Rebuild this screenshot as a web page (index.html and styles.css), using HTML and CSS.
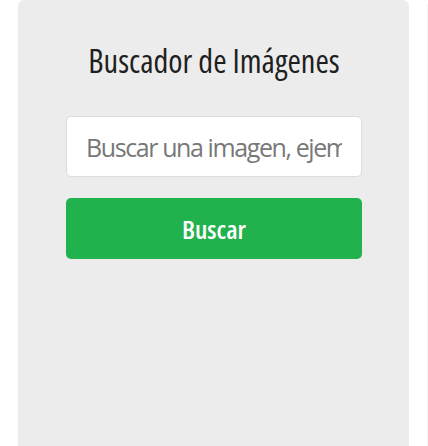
FILE: index.html
```html
<!DOCTYPE html>
<html lang="es">
<head>
<meta charset="utf-8">
<title>Buscador de Imágenes</title>
<link rel="stylesheet" href="styles.css">
</head>
<body>
<div class="layout">
  <section class="panel">
    <h1 class="title">Buscador de Imágenes</h1>
    <form class="search">
      <input class="search-input" type="text" placeholder="Buscar una imagen, ejemplo: café">
      <button class="search-button" type="button">Buscar</button>
    </form>
  </section>
  <section class="panel panel-next"></section>
</div>
</body>
</html>
```
FILE: styles.css
```css
html, body {
  margin: 0;
  padding: 0;
  background: #ffffff;
  height: 100%;
  overflow: hidden;
}

.layout {
  display: flex;
  gap: 18px;
  padding: 0 18px;
  height: 100%;
}

.panel {
  flex: 0 0 391px;
  box-sizing: border-box;
  background: #ececec;
  border-radius: 6px 6px 0 0;
  padding: 40px 47px 0 48px;
  display: flex;
  flex-direction: column;
}

.panel-next {
  background: #f6f6f6;
}

.title {
  margin: 0;
  font-family: "Open Sans", sans-serif;
  font-stretch: 75%;
  font-weight: 500;
  font-size: 32.4px;
  line-height: 40px;
  color: #1f1f1f;
  text-align: center;
  white-space: nowrap;
}

.search {
  margin-top: 36px;
  display: flex;
  flex-direction: column;
  gap: 21px;
}

.search-input {
  box-sizing: border-box;
  height: 61px;
  width: 100%;
  border: 1px solid #d9dce2;
  border-radius: 5px;
  background: #ffffff;
  padding: 0 19px;
  font-family: "Open Sans", sans-serif;
  font-size: 25px;
  letter-spacing: -1.4px;
  color: #333;
  outline: none;
}

.search-input::placeholder {
  color: #787878;
}

.search-button {
  box-sizing: border-box;
  height: 61px;
  width: 100%;
  border: none;
  border-radius: 5px;
  background: #22b24d;
  color: #ffffff;
  font-family: "Open Sans", sans-serif;
  font-stretch: 75%;
  font-weight: 600;
  font-size: 26px;
  cursor: pointer;
}
```
